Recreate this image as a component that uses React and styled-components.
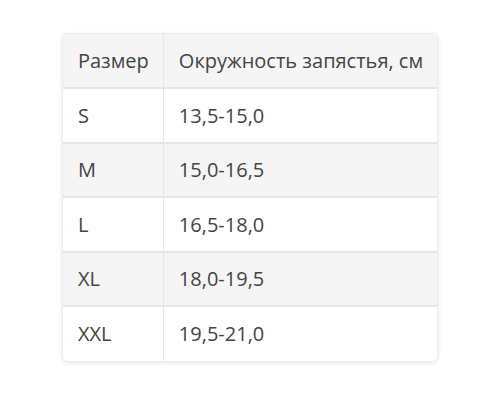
import React from 'react';
import styled, { createGlobalStyle } from 'styled-components';

const GlobalStyle = createGlobalStyle`
  html, body {
    margin: 0;
    padding: 0;
    background: #ffffff;
  }
  body {
    font-family: "Open Sans", "Liberation Sans", sans-serif;
  }
`;

const Page = styled.div`
  width: 500px;
  height: 400px;
  display: flex;
  justify-content: center;
  padding-top: 33px;
  box-sizing: border-box;
`;

const Card = styled.div`
  align-self: flex-start;
  border: 1px solid #ececec;
  border-radius: 6px;
  box-shadow: 0 1px 4px rgba(0, 0, 0, 0.1);
  overflow: hidden;
  background: #fff;
`;

const Table = styled.table`
  border-collapse: collapse;
  color: #444;
  font-size: 20px;
`;

const Row = styled.tr`
  background: ${p => (p.$shade ? '#f5f5f5' : '#ffffff')};
  border-top: ${p => (p.$first ? 'none' : '2px solid #e6e6e6')};
`;

const Cell = styled.td`
  height: ${p => (p.$head ? '54px' : '54.5px')};
  padding: 0 14px 0 15px;
  text-align: left;
  white-space: nowrap;
  box-sizing: border-box;
  border-left: ${p => (p.$first ? 'none' : '1px solid #e6e6e6')};
  width: ${p => (p.$first ? '100px' : 'auto')};
`;

const HeadCell = styled(Cell).attrs({ as: 'th', $head: true })`
  font-weight: normal;
`;

const sizes = [
  ['S', '13,5-15,0'],
  ['M', '15,0-16,5'],
  ['L', '16,5-18,0'],
  ['XL', '18,0-19,5'],
  ['XXL', '19,5-21,0'],
];

export default function App() {
  return (
    <>
      <GlobalStyle />
      <Page>
        <Card>
          <Table>
            <thead>
              <Row $shade $first>
                <HeadCell $first>Размер</HeadCell>
                <HeadCell>Окружность запястья, см</HeadCell>
              </Row>
            </thead>
            <tbody>
              {sizes.map(([s, r], i) => (
                <Row key={s} $shade={i % 2 === 1}>
                  <Cell $first>{s}</Cell>
                  <Cell>{r}</Cell>
                </Row>
              ))}
            </tbody>
          </Table>
        </Card>
      </Page>
    </>
  );
}
